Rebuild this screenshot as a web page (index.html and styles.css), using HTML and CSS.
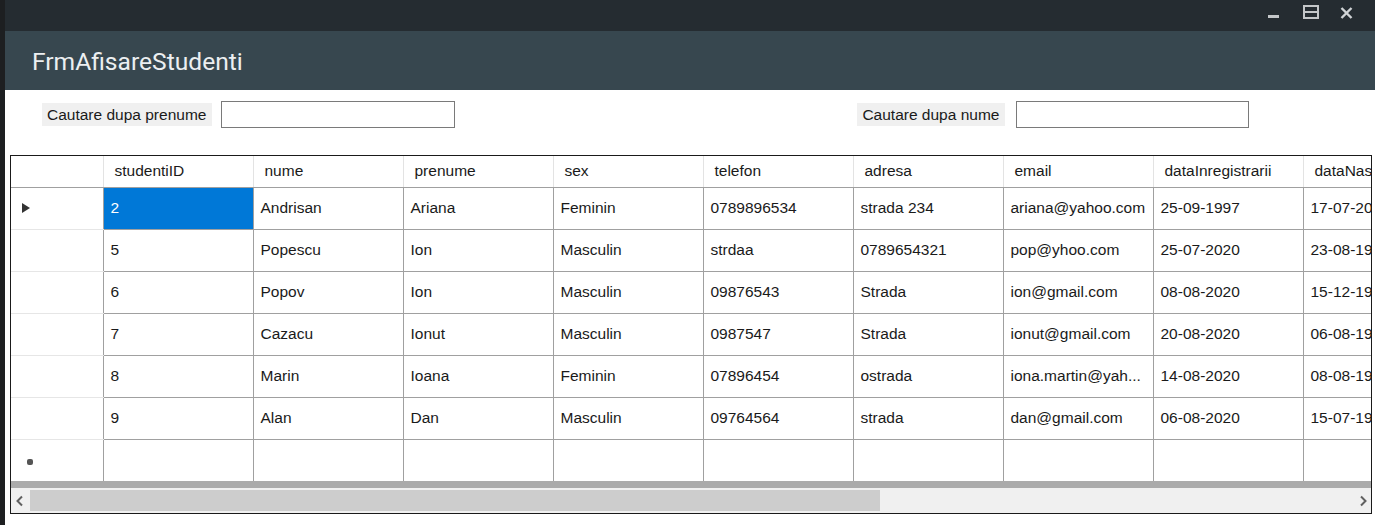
FILE: index.html
```html
<!DOCTYPE html>
<html>
<head>
<meta charset="utf-8">
<link rel="stylesheet" href="styles.css">
</head>
<body>
<div class="screen">
  <div class="strip"></div>
  <div class="window">
    <div class="titlebar">
      <div class="controls">
        <span class="ctl min"></span>
        <span class="ctl max"></span>
        <svg class="ctl close" width="13" height="12" viewBox="0 0 13 12"><path d="M1.5 1 L11.5 11 M11.5 1 L1.5 11" stroke="#d0d3d5" stroke-width="2.4"/></svg>
      </div>
    </div>
    <div class="header"><span class="title">FrmAfisareStudenti</span></div>
    <div class="content">
      <div class="search">
        <div class="group">
          <span class="label">Cautare dupa prenume</span>
          <span class="textbox"></span>
        </div>
        <div class="group group2">
          <span class="label">Cautare dupa nume</span>
          <span class="textbox"></span>
        </div>
      </div>
      <div class="grid">
        <div class="gridbody">
          <table class="dgv">
            <colgroup>
              <col class="c-rh"><col class="c"><col class="c"><col class="c"><col class="c"><col class="c"><col class="c"><col class="c"><col class="c"><col class="c">
            </colgroup>
            <thead>
              <tr>
                <th class="rh"></th>
                <th>studentiID</th><th>nume</th><th>prenume</th><th>sex</th><th>telefon</th><th>adresa</th><th>email</th><th>dataInregistrarii</th><th>dataNasterii</th>
              </tr>
            </thead>
            <tbody>
              <tr><td class="rh"><span class="arrow"></span></td><td class="sel">2</td><td>Andrisan</td><td>Ariana</td><td>Feminin</td><td>0789896534</td><td>strada 234</td><td>ariana@yahoo.com</td><td>25-09-1997</td><td>17-07-2000</td></tr>
              <tr><td class="rh"></td><td>5</td><td>Popescu</td><td>Ion</td><td>Masculin</td><td>strdaa</td><td>0789654321</td><td>pop@yhoo.com</td><td>25-07-2020</td><td>23-08-1999</td></tr>
              <tr><td class="rh"></td><td>6</td><td>Popov</td><td>Ion</td><td>Masculin</td><td>09876543</td><td>Strada</td><td>ion@gmail.com</td><td>08-08-2020</td><td>15-12-1998</td></tr>
              <tr><td class="rh"></td><td>7</td><td>Cazacu</td><td>Ionut</td><td>Masculin</td><td>0987547</td><td>Strada</td><td>ionut@gmail.com</td><td>20-08-2020</td><td>06-08-1999</td></tr>
              <tr><td class="rh"></td><td>8</td><td>Marin</td><td>Ioana</td><td>Feminin</td><td>07896454</td><td>ostrada</td><td>iona.martin@yah...</td><td>14-08-2020</td><td>08-08-1999</td></tr>
              <tr><td class="rh"></td><td>9</td><td>Alan</td><td>Dan</td><td>Masculin</td><td>09764564</td><td>strada</td><td>dan@gmail.com</td><td>06-08-2020</td><td>15-07-1999</td></tr>
              <tr class="newrow"><td class="rh"><span class="star"></span></td><td></td><td></td><td></td><td></td><td></td><td></td><td></td><td></td><td></td></tr>
            </tbody>
          </table>
        </div>
        <div class="hscroll">
          <span class="sbtn"><svg width="10" height="12" viewBox="0 0 10 12"><path d="M7 1.5 L2.5 6 L7 10.5" fill="none" stroke="#606060" stroke-width="2"/></svg></span>
          <div class="track"><span class="thumb"></span></div>
          <span class="sbtn"><svg width="10" height="12" viewBox="0 0 10 12"><path d="M3 1.5 L7.5 6 L3 10.5" fill="none" stroke="#606060" stroke-width="2"/></svg></span>
        </div>
      </div>
    </div>
  </div>
</div>
</body>
</html>
```

FILE: styles.css
```css
html, body {
  margin: 0;
  padding: 0;
  background: #ffffff;
}
body {
  width: 1375px;
  height: 525px;
  overflow: hidden;
  font-family: "Liberation Sans", Arial, sans-serif;
}
.screen {
  display: flex;
  height: 525px;
}
.strip {
  width: 5px;
  flex: 0 0 5px;
  background: #1d1f21;
}
.window {
  flex: 1;
  display: flex;
  flex-direction: column;
  min-width: 0;
}
.titlebar {
  height: 31px;
  background: #252c31;
  display: flex;
  justify-content: flex-end;
}
.controls {
  display: flex;
  align-items: flex-start;
  padding-right: 22px;
}
.ctl {
  display: block;
}
.min {
  width: 11px;
  height: 3px;
  background: #c4c7c9;
  margin-top: 15px;
  margin-right: 24px;
}
.max {
  width: 12px;
  height: 10px;
  border: 2px solid #c4c7c9;
  margin-top: 5px;
  margin-right: 21px;
  background: linear-gradient(#c4c7c9, #c4c7c9) 0 4px / 100% 2px no-repeat;
}
.close {
  margin-top: 7px;
}
.header {
  height: 59px;
  background: #37474f;
  display: flex;
  align-items: center;
  padding-left: 27px;
}
.title {
  font-family: Roboto, "Liberation Sans", sans-serif;
  font-size: 24.6px;
  color: #eceff1;
  padding-top: 1px;
}
.content {
  flex: 1;
  display: flex;
  flex-direction: column;
  padding: 11px 3px 0 5px;
}
.search {
  display: flex;
  gap: 402px;
  padding-left: 32px;
  height: 27px;
  align-items: center;
}
.group {
  display: flex;
  align-items: center;
  gap: 9px;
}
.group2 {
  gap: 11px;
}
.label {
  background: #f0f0f0;
  font-size: 15.5px;
  color: #1a1a1a;
  height: 23px;
  line-height: 23px;
  padding: 0 6px 0 5px;
}
.textbox {
  display: block;
  width: 232px;
  height: 25px;
  border: 1px solid #7a7a7a;
  background: #fff;
}
.group2 .textbox {
  width: 231px;
}
.grid {
  margin-top: 27px;
  width: 1360px;
  height: 357px;
  border: 1px solid #1a1a1a;
  display: flex;
  flex-direction: column;
  background: #ababab;
  overflow: hidden;
}
.gridbody {
  flex: 1;
  overflow: hidden;
}
.dgv {
  border-collapse: collapse;
  table-layout: fixed;
  width: 1442px;
  font-size: 15.5px;
  color: #1a1a1a;
  background: #fff;
}
.c-rh { width: 92px; }
.c { width: 150px; }
.dgv th {
  height: 31px;
  padding: 0 0 0 11px;
  text-align: left;
  font-weight: normal;
  border-left: 1px solid #e3e3e3;
  border-bottom: 1px solid #a0a0a0;
  white-space: nowrap;
  overflow: hidden;
  box-sizing: border-box;
}
.dgv th.rh {
  border-left: none;
}
.dgv td {
  height: 42px;
  padding: 0 0 0 7px;
  border-left: 1px solid #a0a0a0;
  border-bottom: 1px solid #a0a0a0;
  white-space: nowrap;
  overflow: hidden;
  box-sizing: border-box;
}
.dgv td.rh {
  border-left: none;
  border-bottom: 1px solid #e6e6e6;
}
.dgv tr.newrow td {
  border-bottom: none;
}
.dgv td.sel {
  background: #0078d7;
  color: #fff;
}
.arrow {
  display: block;
  margin-left: 4px;
  width: 0;
  height: 0;
  border-top: 5px solid transparent;
  border-bottom: 5px solid transparent;
  border-left: 8px solid #333;
}
.star {
  display: block;
  margin-left: 9px;
  margin-top: 4px;
  width: 6px;
  height: 6px;
  border-radius: 2px;
  background: #555;
}
.hscroll {
  height: 25px;
  margin-top: 6px;
  background: #f0f0f0;
  display: flex;
  align-items: stretch;
}
.sbtn {
  width: 17px;
  display: flex;
  align-items: center;
  justify-content: center;
}
.track {
  flex: 1;
  display: flex;
  align-items: stretch;
  padding: 2px 0;
}
.thumb {
  width: 850px;
  margin-left: 2px;
  background: #cdcdcd;
}
```
